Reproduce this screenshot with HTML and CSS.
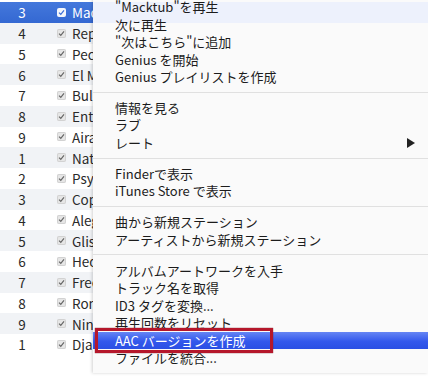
FILE: index.html
```html
<!DOCTYPE html>
<html lang="ja">
  <head>
    <meta charset="UTF-8" />
    <title>iTunes context menu</title>
    <link rel="stylesheet" href="styles.css">
  </head>
  <body>
    <div class="screen">
      <div class="tracks">
        <div class="track selected"><span class="num">3</span><span class="check"><svg viewBox="0 0 9 9"><path d="M2 4.6 L3.8 6.4 L7 2.4" /></svg></span><span class="title">Macktub</span></div>
        <div class="track"><span class="num">4</span><span class="check"><svg viewBox="0 0 9 9"><path d="M2 4.6 L3.8 6.4 L7 2.4" /></svg></span><span class="title">Reprise</span></div>
        <div class="track"><span class="num">5</span><span class="check"><svg viewBox="0 0 9 9"><path d="M2 4.6 L3.8 6.4 L7 2.4" /></svg></span><span class="title">Pecheur</span></div>
        <div class="track"><span class="num">6</span><span class="check"><svg viewBox="0 0 9 9"><path d="M2 4.6 L3.8 6.4 L7 2.4" /></svg></span><span class="title">El Mar</span></div>
        <div class="track"><span class="num">7</span><span class="check"><svg viewBox="0 0 9 9"><path d="M2 4.6 L3.8 6.4 L7 2.4" /></svg></span><span class="title">Bulerias</span></div>
        <div class="track"><span class="num">8</span><span class="check"><svg viewBox="0 0 9 9"><path d="M2 4.6 L3.8 6.4 L7 2.4" /></svg></span><span class="title">Entre Dos</span></div>
        <div class="track"><span class="num">9</span><span class="check"><svg viewBox="0 0 9 9"><path d="M2 4.6 L3.8 6.4 L7 2.4" /></svg></span><span class="title">Airado</span></div>
        <div class="track"><span class="num">1</span><span class="check"><svg viewBox="0 0 9 9"><path d="M2 4.6 L3.8 6.4 L7 2.4" /></svg></span><span class="title">Naturaleza</span></div>
        <div class="track"><span class="num">2</span><span class="check"><svg viewBox="0 0 9 9"><path d="M2 4.6 L3.8 6.4 L7 2.4" /></svg></span><span class="title">Psycho</span></div>
        <div class="track"><span class="num">3</span><span class="check"><svg viewBox="0 0 9 9"><path d="M2 4.6 L3.8 6.4 L7 2.4" /></svg></span><span class="title">Copla</span></div>
        <div class="track"><span class="num">4</span><span class="check"><svg viewBox="0 0 9 9"><path d="M2 4.6 L3.8 6.4 L7 2.4" /></svg></span><span class="title">Alegrias</span></div>
        <div class="track"><span class="num">5</span><span class="check"><svg viewBox="0 0 9 9"><path d="M2 4.6 L3.8 6.4 L7 2.4" /></svg></span><span class="title">Glissando</span></div>
        <div class="track"><span class="num">6</span><span class="check"><svg viewBox="0 0 9 9"><path d="M2 4.6 L3.8 6.4 L7 2.4" /></svg></span><span class="title">Hedonism</span></div>
        <div class="track"><span class="num">7</span><span class="check"><svg viewBox="0 0 9 9"><path d="M2 4.6 L3.8 6.4 L7 2.4" /></svg></span><span class="title">Freedom</span></div>
        <div class="track"><span class="num">8</span><span class="check"><svg viewBox="0 0 9 9"><path d="M2 4.6 L3.8 6.4 L7 2.4" /></svg></span><span class="title">Romance</span></div>
        <div class="track"><span class="num">9</span><span class="check"><svg viewBox="0 0 9 9"><path d="M2 4.6 L3.8 6.4 L7 2.4" /></svg></span><span class="title">Nine Lives</span></div>
        <div class="track"><span class="num">1</span><span class="check"><svg viewBox="0 0 9 9"><path d="M2 4.6 L3.8 6.4 L7 2.4" /></svg></span><span class="title">Django</span></div>
      </div>

      <div class="menu">
        <div class="item">"Macktub"を再生</div>
        <div class="item">次に再生</div>
        <div class="item">"次はこちら"に追加</div>
        <div class="item">Genius を開始</div>
        <div class="item">Genius プレイリストを作成</div>
        <div class="sep"></div>
        <div class="item">情報を見る</div>
        <div class="item">ラブ</div>
        <div class="item">レート<svg class="arrow" viewBox="0 0 8 10"><path d="M0 0 L8 5 L0 10 Z" /></svg></div>
        <div class="sep"></div>
        <div class="item">Finderで表示</div>
        <div class="item">iTunes Store で表示</div>
        <div class="sep"></div>
        <div class="item">曲から新規ステーション</div>
        <div class="item">アーティストから新規ステーション</div>
        <div class="sep"></div>
        <div class="item">アルバムアートワークを入手</div>
        <div class="item">トラック名を取得</div>
        <div class="item">ID3 タグを変換...</div>
        <div class="item">再生回数をリセット</div>
        <div class="item active">AAC バージョンを作成</div>
        <div class="item">ファイルを統合...</div>
      </div>

      <!-- 注目ポイントの赤枠 -->
      <div class="callout"></div>
    </div>
  </body>
</html>
```

FILE: styles.css
```css
body {
  margin: 0;
  background: #fff;
  font-family: 'Noto Sans CJK JP', 'Noto Sans', sans-serif;
}
.screen {
  position: relative;
  display: flex;
  align-items: flex-start;
  width: 428px;
  height: 376px;
  overflow: hidden;
}
.tracks {
  flex: none;
  width: 93px;
  padding-top: 2px;
  overflow: hidden;
}
.track {
  display: flex;
  align-items: center;
  height: 20.75px;
  line-height: 20px;
  font-size: 13.5px;
  color: #2a2a2a;
  white-space: nowrap;
}
.track:nth-child(even) {
  background: #f1f3f6;
}
.track.selected {
  background: linear-gradient(#4478dc, #3468d2);
  color: #fff;
}
.num {
  flex: none;
  width: 44px;
  text-align: center;
}
.check {
  flex: none;
  width: 9px;
  height: 9px;
  margin-left: 13px;
  margin-right: 6px;
  border-radius: 2px;
  background: #e6e6e6;
  box-shadow: inset 0 0 0 1px #d2d2d2;
}
.check svg {
  display: block;
  width: 9px;
  height: 9px;
  fill: none;
  stroke: #666;
  stroke-width: 1.2;
}
.selected .check {
  background: #f4f6fb;
  box-shadow: none;
}
.selected .check svg {
  stroke: #3a6ed8;
}
.menu {
  flex: 1;
  margin-top: -2px;
  padding-bottom: 6px;
  background: linear-gradient(#fafafa 0 4px, #edf1fc 4px 25px, #fafafa 25px);
  box-shadow: -1px 0 3px rgba(0, 0, 0, 0.18);
}
.item {
  display: flex;
  align-items: center;
  justify-content: space-between;
  height: 17.5px;
  line-height: 17.5px;
  padding: 0 13px 0 22px;
  font-size: 13px;
  color: #1c1c1c;
  white-space: nowrap;
}
.item.active {
  background: linear-gradient(#6585f4, #3358ec 55%, #2a4fe4);
  color: #fff;
}
.arrow {
  width: 8px;
  height: 10px;
  fill: #222;
}
.sep {
  height: 1px;
  margin: 6.2px 0;
  background: #e0e0e0;
}
.callout {
  position: absolute;
  left: 95px;
  top: 328px;
  width: 172px;
  height: 19px;
  border: 3px solid #b5172b;
  box-shadow: 0 0 1px #6e0c16;
}
```
